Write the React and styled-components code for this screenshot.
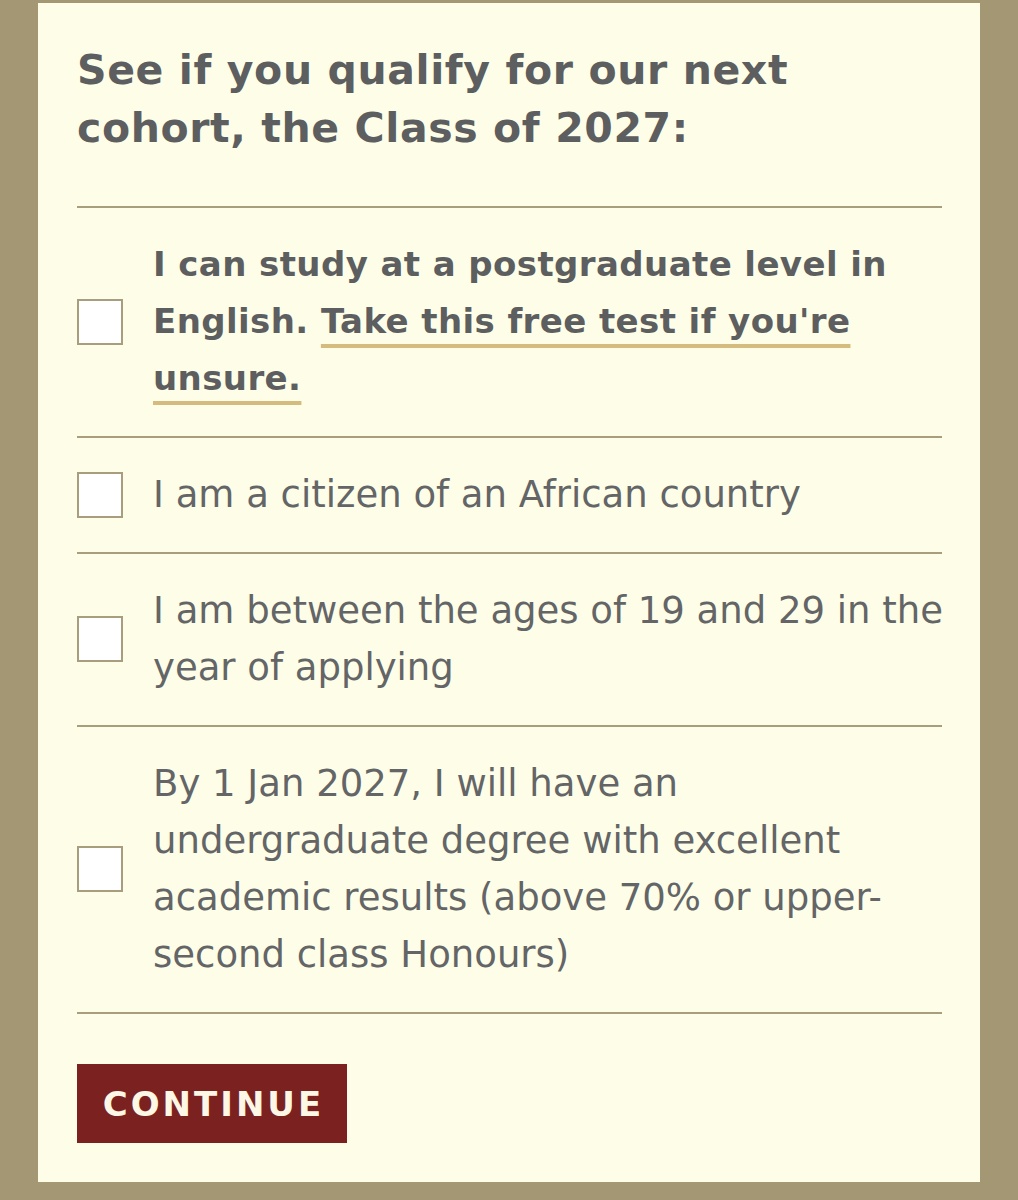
import React from "react";
import styled, { createGlobalStyle } from "styled-components";

const Global = createGlobalStyle`
  html, body { margin: 0; padding: 0; background: #a39873; }
  body { font-family: "DejaVu Sans", "Inter", sans-serif; }
`;

const Card = styled.div`
  margin: 3px 38px 0 38px;
  width: 942px;
  box-sizing: border-box;
  background: #fefee8;
  padding: 38px 38px 39px 39px;
`;

const Heading = styled.h2`
  margin: 0 0 49px 0;
  max-width: 810px;
  font-size: 41px;
  line-height: 58px;
  font-weight: 700;
  letter-spacing: 0.6px;
  color: #5d5e60;
`;

const List = styled.div`
  display: flex;
  flex-direction: column;
  border-top: 2px solid #a89d7c;
`;

const Item = styled.label`
  display: flex;
  align-items: center;
  gap: 30px;
  padding: 28px 0 29px 0;
  border-bottom: 2px solid #a89d7c;
  cursor: pointer;
`;

const Box = styled.span`
  flex: 0 0 auto;
  width: 46px;
  height: 46px;
  box-sizing: border-box;
  border: 2px solid #a89d7c;
  background: #ffffff;
`;

const Text = styled.span`
  flex: 1;
  margin-right: -8px;
  font-size: ${(p) => (p.$bold ? "34px" : "37px")};
  letter-spacing: ${(p) => (p.$bold ? "0.4px" : "0")};
  line-height: 57px;
  color: ${(p) => (p.$bold ? "#5d5e60" : "#646567")};
  font-weight: ${(p) => (p.$bold ? 700 : 400)};
`;

const Link = styled.a`
  color: inherit;
  text-decoration: underline;
  text-decoration-color: #d5bb7e;
  text-decoration-thickness: 4px;
  text-underline-offset: 11px;
`;

const Button = styled.button`
  margin-top: 50px;
  width: 270px;
  height: 79px;
  padding: 0 0 0 3px;
  border: none;
  background: #7b2120;
  color: #fdf8e6;
  font-family: "DejaVu Sans", sans-serif;
  font-weight: 700;
  font-size: 34px;
  letter-spacing: 3px;
  text-transform: uppercase;
  cursor: pointer;
`;

export default function App() {
  return (
    <>
      <Global />
      <Card>
        <Heading>
          See if you qualify for our next cohort, the Class of 2027:
        </Heading>
        <List>
          <Item>
            <Box />
            <Text $bold>
              I can study at a postgraduate level in English.{" "}
              <Link href="#">Take this free test if you're unsure.</Link>
            </Text>
          </Item>
          <Item>
            <Box />
            <Text>I am a citizen of an African country</Text>
          </Item>
          <Item>
            <Box />
            <Text>I am between the ages of 19 and 29 in the year of applying</Text>
          </Item>
          <Item>
            <Box />
            <Text>
              By 1 Jan 2027, I will have an undergraduate degree with excellent
              academic results (above 70% or upper-second class Honours)
            </Text>
          </Item>
        </List>
        <Button>Continue</Button>
      </Card>
    </>
  );
}
